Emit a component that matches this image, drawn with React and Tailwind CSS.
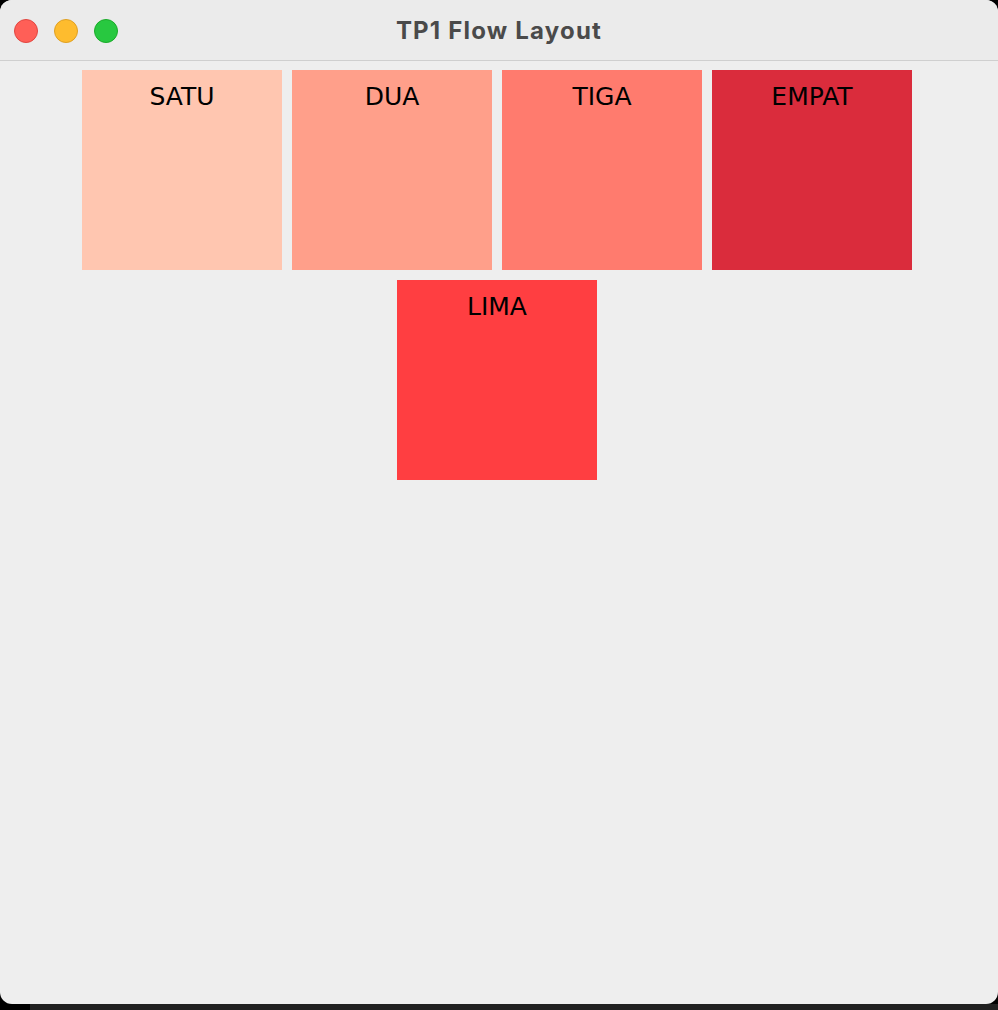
const boxes = [
  { label: "SATU", color: "bg-[#ffc6b0]" },
  { label: "DUA", color: "bg-[#ff9f8a]" },
  { label: "TIGA", color: "bg-[#ff7b6e]" },
  { label: "EMPAT", color: "bg-[#da2c3c]" },
  { label: "LIMA", color: "bg-[#ff3e41]" },
]

export default function App() {
  return (
    <div className="w-[998px] h-[1010px] bg-black flex flex-col overflow-hidden">
      <div className="w-full h-[1004px] flex flex-col rounded-[12px] overflow-hidden bg-[#eeeeee]">
        {/* title bar */}
        <div className="h-[61px] shrink-0 flex items-center bg-[#ebebeb] border-b border-[#cfcfcf] relative">
          <div className="flex items-center gap-[16px] pl-[14px] pt-[2px]">
            <span className="w-[24px] h-[24px] rounded-full bg-[#ff5f57] border border-[#e14640]" />
            <span className="w-[24px] h-[24px] rounded-full bg-[#febc2e] border border-[#dfa023]" />
            <span className="w-[24px] h-[24px] rounded-full bg-[#28c840] border border-[#1aab29]" />
          </div>
          <div className="absolute inset-0 flex items-center justify-center pt-[2px] pointer-events-none">
            <span className="font-['Inter',sans-serif] font-bold text-[24px] tracking-[1.2px] text-[#4a4a4a]">
              TP1 Flow Layout
            </span>
          </div>
        </div>

        {/* flow layout content */}
        <div className="flex-1 pt-[9px] pr-[4px]">
          <div className="flex flex-wrap justify-center gap-[10px]">
            {boxes.map((b) => (
              <div key={b.label} className={`w-[200px] h-[200px] ${b.color} flex justify-center pt-[13px]`}>
                <span className="font-['DejaVu_Sans',sans-serif] text-[25px] leading-[28px] text-black">
                  {b.label}
                </span>
              </div>
            ))}
          </div>
        </div>
      </div>
      <div className="flex-1 flex">
        <div className="w-[30px] bg-black" />
        <div className="flex-1 bg-[#202020]" />
      </div>
    </div>
  )
}
